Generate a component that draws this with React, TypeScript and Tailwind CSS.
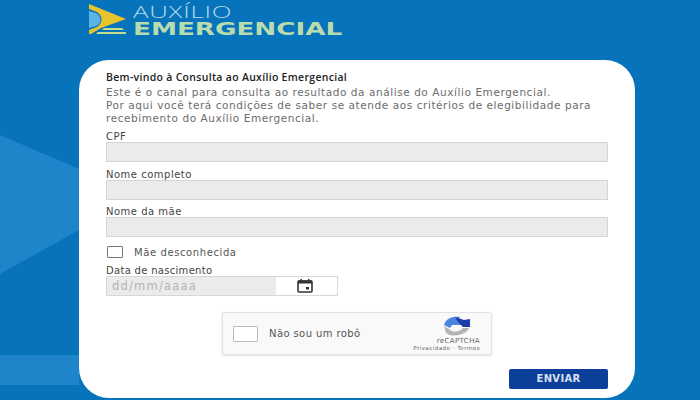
const font = { fontFamily: '"Open Sans", "Liberation Sans", sans-serif' };
const wide = { fontFamily: '"DejaVu Sans", "Liberation Sans", sans-serif' };

function Logo() {
  return (
    <svg width="38" height="31" viewBox="0 0 38 31" className="shrink-0">
      <path d="M0 0 L37 15 L12 24 L2 30 L0 30 L0 26 L8 23 C14 19 14 12 8 8 L0 5 Z" fill="#e8c42c" />
      <path d="M0 7 L7 9 C13 13 13 19 7 22 L0 24 Z" fill="#5bb4e8" />
      <path d="M15 24 L33 24 L35 26 L13 26 Z M9 28 L37 28 L37 30 L7 30 Z" fill="#c4dc8f" />
    </svg>
  );
}

function Field({ label }: { label: string }) {
  return (
    <div className="flex flex-col">
      <label className="text-[10px] leading-[11px] tracking-[0.5px] text-[#444]" style={wide}>{label}</label>
      <div className="h-[20px] bg-[#ebebeb] border border-[#d4d4d4]" />
    </div>
  );
}

function RecaptchaIcon() {
  return (
    <svg width="28" height="20" viewBox="0 0 28 20">
      <path d="M1 9 C3 2 10 0 17 1 L15 4 L20 9 L9 9 L7 12 Z" fill="#4a86e0" />
      <path d="M12 1 L21 4 L27 3 L27 11 L20 11 L15 6 Z" fill="#1c3aa9" />
      <path d="M1 10 L6 13 C10 17 17 16 20 12 L26 12 C24 19 8 22 3 17 Z" fill="#b4b4b4" />
    </svg>
  );
}

export default function App() {
  return (
    <div className="relative w-[700px] h-[400px] overflow-hidden bg-[#0673bb]" style={font}>
      {/* faixas claras do fundo */}
      <svg className="absolute left-0 top-0" width="79" height="400" viewBox="0 0 79 400">
        <path d="M0 135 L79 169 L79 230 L0 274 Z" fill="#1f85ca" />
        <rect x="0" y="355" width="79" height="30" fill="#1f85ca" />
      </svg>

      <div className="relative flex flex-col h-full">
        <header className="h-[60px] pl-[89px] pt-[4px] flex items-start gap-[6px]">
          <Logo />
          <div className="flex flex-col">
            <span className="text-[17px] leading-[16px] font-light tracking-[0.5px] text-[#b5dbe8] origin-left scale-x-[1.52]">AUXÍLIO</span>
            <span className="mt-[2px] text-[17px] leading-[15px] font-bold text-[#b9dcae] origin-left scale-x-[1.54]" style={wide}>EMERGENCIAL</span>
          </div>
        </header>

        <main className="ml-[79px] w-[556px] h-[338px] bg-white rounded-[30px] px-[27px] pt-[11px] flex flex-col">
          <h1 className="text-[10.5px] leading-[13px] font-semibold tracking-[0.3px] text-[#222]">
            Bem-vindo à Consulta ao Auxílio Emergencial
          </h1>
          <p className="mt-[2px] text-[10.5px] leading-[13px] tracking-[0.57px] text-[#6c6c6c]" style={wide}>
            Este é o canal para consulta ao resultado da análise do Auxílio Emergencial.
            <br />
            Por aqui você terá condições de saber se atende aos critérios de elegibilidade para
            <br />
            recebimento do Auxílio Emergencial.
          </p>

          <div className="mt-[6px] flex flex-col gap-[6.5px] w-[502px]">
            <Field label="CPF" />
            <Field label="Nome completo" />
            <Field label="Nome da mãe" />
          </div>

          <div className="mt-[9px] flex items-center gap-[10px] h-[12px]">
            <div className="w-[16px] h-[12px] border border-[#777] rounded-[1px] ml-[1px]" />
            <span className="ml-[1px] text-[10px] tracking-[0.6px] text-[#555]" style={wide}>Mãe desconhecida</span>
          </div>

          <label className="mt-[7px] text-[10px] leading-[11px] tracking-[0.3px] text-[#444]" style={wide}>Data de nascimento</label>
          <div className="w-[232px] h-[20px] flex border border-[#d8d8d8]">
            <div className="w-[169px] bg-[#ebebeb] pl-[5px] text-[11.5px] leading-[18px] tracking-[1.2px] text-[#b4b4b4]" style={wide}>
              dd/mm/aaaa
            </div>
            <div className="flex-1 flex items-center justify-center pr-[4px]">
              <svg width="16" height="14" viewBox="0 0 16 14">
                <rect x="1" y="2" width="14" height="11" rx="1" fill="none" stroke="#333" strokeWidth="1.6" />
                <rect x="1" y="1.5" width="14" height="3" fill="#333" />
                <rect x="3.5" y="0" width="1.5" height="2" fill="#333" />
                <rect x="11" y="0" width="1.5" height="2" fill="#333" />
                <rect x="9" y="8" width="3" height="2.5" fill="#333" />
              </svg>
            </div>
          </div>

          <div className="mt-[16px] ml-[116px] w-[270px] h-[43px] flex items-center bg-[#f9f9f9] border border-[#e2e2e2] rounded-[2px] shadow-sm">
            <div className="ml-[10px] w-[25px] h-[16px] bg-white border border-[#bbb] rounded-[1px]" />
            <span className="ml-[11px] text-[10px] tracking-[0.4px] text-[#555]" style={wide}>Não sou um robô</span>
            <div className="ml-auto mr-[11px] flex flex-col items-end">
              <div className="mr-[9px]">
                <RecaptchaIcon />
              </div>
              <span className="mt-[1px] text-[7px] leading-[8px] tracking-[0.4px] text-[#666]" style={wide}>reCAPTCHA</span>
              <span className="text-[5.5px] leading-[7px] tracking-[0.5px] text-[#666]" style={wide}>Privacidade · Termos</span>
            </div>
          </div>

          <div className="mt-[14px] w-[502px] flex justify-end">
            <button className="w-[99px] h-[20px] bg-[#0c3f9a] rounded-[2px] text-[10px] leading-[20px] font-bold tracking-[0.3px] text-[#d9e2f2]" style={wide}>
              ENVIAR
            </button>
          </div>
        </main>
      </div>
    </div>
  );
}
